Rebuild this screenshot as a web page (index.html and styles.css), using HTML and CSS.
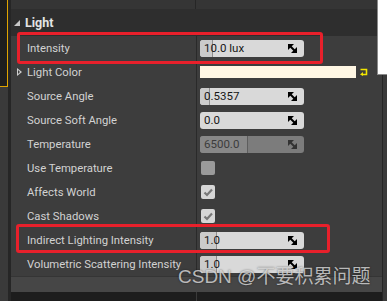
FILE: index.html
```html
<!DOCTYPE html>
<html lang="en">
<head>
    <meta charset="UTF-8">
    <meta name="viewport" content="width=device-width, initial-scale=1.0">
    <title>Light Details</title>
    <link rel="stylesheet" href="styles.css">
</head>
<body>
    <div id="screen">
        <div class="side-left">
            <div class="outline-box"></div>
        </div>

        <div class="panel">
            <div class="topbar">
                <div class="topbar-name"></div>
                <div class="topbar-value"></div>
            </div>
            <div class="section-head">
                <span class="caret"></span>
                <span class="section-title">Light</span>
            </div>

            <ul class="rows">
                <li class="row">
                    <div class="label">Intensity</div>
                    <div class="value">
                        <div class="num">
                            <div class="fill" style="width: 13px"></div>
                            <span class="num-text">10.0 lux</span>
                            <svg class="drag" width="9" height="9" viewBox="0 0 9 9"><polygon points="0,0 6,0 0,6"/><polygon points="9,9 3,9 9,3"/><line x1="1" y1="1" x2="8" y2="8" stroke="#000" stroke-width="2"/></svg>
                        </div>
                    </div>
                </li>
                <li class="row">
                    <div class="label"><span class="expander"></span>Light Color</div>
                    <div class="value">
                        <div class="color-bar"></div>
                        <svg class="reset" width="8" height="8" viewBox="0 0 8 8"><path d="M0.5 1.5 H6.5 V6.5 H2.5" fill="none" stroke="#f2e600" stroke-width="1.6"/><polygon points="0,6.5 3,4 3,8" fill="#f2e600"/></svg>
                    </div>
                </li>
                <li class="row">
                    <div class="label">Source Angle</div>
                    <div class="value">
                        <div class="num">
                            <div class="fill" style="width: 10px"></div>
                            <span class="num-text">0.5357</span>
                            <svg class="drag" width="9" height="9" viewBox="0 0 9 9"><polygon points="0,0 6,0 0,6"/><polygon points="9,9 3,9 9,3"/><line x1="1" y1="1" x2="8" y2="8" stroke="#000" stroke-width="2"/></svg>
                        </div>
                    </div>
                </li>
                <li class="row">
                    <div class="label">Source Soft Angle</div>
                    <div class="value">
                        <div class="num">
                            <span class="num-text">0.0</span>
                            <svg class="drag" width="9" height="9" viewBox="0 0 9 9"><polygon points="0,0 6,0 0,6"/><polygon points="9,9 3,9 9,3"/><line x1="1" y1="1" x2="8" y2="8" stroke="#000" stroke-width="2"/></svg>
                        </div>
                    </div>
                </li>
                <li class="row">
                    <div class="label">Temperature</div>
                    <div class="value">
                        <div class="num disabled">
                            <div class="fill" style="width: 48px"></div>
                            <span class="num-text">6500.0</span>
                            <svg class="drag" width="9" height="9" viewBox="0 0 9 9"><polygon points="0,0 6,0 0,6"/><polygon points="9,9 3,9 9,3"/><line x1="1" y1="1" x2="8" y2="8" stroke="#333" stroke-width="2"/></svg>
                        </div>
                    </div>
                </li>
                <li class="row">
                    <div class="label">Use Temperature</div>
                    <div class="value">
                        <span class="check off"></span>
                    </div>
                </li>
                <li class="row">
                    <div class="label">Affects World</div>
                    <div class="value">
                        <span class="check"><svg width="14" height="14" viewBox="0 0 14 14"><path d="M3.5 7.5 L6 10 L11 4.5" fill="none" stroke="#777" stroke-width="2.2"/></svg></span>
                    </div>
                </li>
                <li class="row">
                    <div class="label">Cast Shadows</div>
                    <div class="value">
                        <span class="check"><svg width="14" height="14" viewBox="0 0 14 14"><path d="M3.5 7.5 L6 10 L11 4.5" fill="none" stroke="#777" stroke-width="2.2"/></svg></span>
                    </div>
                </li>
                <li class="row">
                    <div class="label">Indirect Lighting Intensity</div>
                    <div class="value">
                        <div class="num">
                            <div class="fill" style="width: 17px"></div>
                            <span class="num-text">1.0</span>
                            <svg class="drag" width="9" height="9" viewBox="0 0 9 9"><polygon points="0,0 6,0 0,6"/><polygon points="9,9 3,9 9,3"/><line x1="1" y1="1" x2="8" y2="8" stroke="#000" stroke-width="2"/></svg>
                        </div>
                    </div>
                </li>
                <li class="row">
                    <div class="label">Volumetric Scattering Intensity</div>
                    <div class="value">
                        <div class="num">
                            <div class="fill" style="width: 17px"></div>
                            <span class="num-text">1.0</span>
                            <svg class="drag" width="9" height="9" viewBox="0 0 9 9"><polygon points="0,0 6,0 0,6"/><polygon points="9,9 3,9 9,3"/><line x1="1" y1="1" x2="8" y2="8" stroke="#000" stroke-width="2"/></svg>
                        </div>
                    </div>
                </li>
            </ul>

            <div class="footer-strip"></div>
            <div class="footer-dark">
                <div class="footer-name"></div>
                <div class="footer-value"></div>
            </div>
        </div>

        <div class="side-right"></div>

        <div class="popup"></div>
        <div class="mark mark-top"></div>
        <div class="mark mark-bottom"></div>
        <div class="watermark">CSDN @不要积累问题</div>
    </div>
</body>
</html>
```

FILE: styles.css
```css
* {
    box-sizing: border-box;
}
body {
    margin: 0;
    background-color: #1c1c1c;
    font-family: Roboto, "Liberation Sans", sans-serif;
}
#screen {
    position: relative;
    display: flex;
    width: 387px;
    height: 301px;
    overflow: hidden;
}
.side-left {
    width: 11px;
    background-color: #3a3a3a;
    border-right: 3px solid #262626;
}
.outline-box {
    width: 8px;
    height: 87px;
    background-color: #1e1e1e;
    border-right: 1px solid #e0a400;
    border-bottom: 1px solid #e0a400;
}
.panel {
    display: flex;
    flex-direction: column;
    width: 371px;
    background-color: #3d3d3d;
}
.topbar {
    display: flex;
    height: 9px;
    background-color: #353535;
}
.topbar-name {
    width: 185px;
    border-right: 1px solid #262626;
}
.section-head {
    display: flex;
    align-items: center;
    height: 27px;
    padding-left: 3px;
    background-color: #2e2e2e;
    color: #e4e4e4;
    font-size: 12.5px;
    font-weight: bold;
}
.caret {
    width: 0;
    height: 0;
    margin-right: 5px;
    border-left: 6px solid transparent;
    border-bottom: 6px solid #c8c8c8;
}
.rows {
    list-style: none;
    margin: 0;
    padding: 0;
}
.row {
    display: flex;
    height: 24px;
}
.label {
    position: relative;
    display: flex;
    align-items: center;
    width: 186px;
    padding-left: 16px;
    padding-top: 1px;
    border-right: 1px solid #2a2a2a;
    color: #d2d2d2;
    font-size: 11.3px;
    white-space: nowrap;
}
.expander {
    position: absolute;
    left: 6px;
    top: 8px;
    width: 0;
    height: 0;
    border-top: 4px solid transparent;
    border-bottom: 4px solid transparent;
    border-left: 5px solid #cfcfcf;
}
.expander::after {
    content: "";
    position: absolute;
    left: -4px;
    top: -2px;
    border-top: 2px solid transparent;
    border-bottom: 2px solid transparent;
    border-left: 2px solid #3d3d3d;
}
.value {
    display: flex;
    align-items: center;
    flex: 1;
    padding-left: 3px;
}
.num {
    position: relative;
    display: flex;
    align-items: center;
    width: 104px;
    height: 17px;
    padding: 0 4px;
    border-radius: 3px;
    background-color: #d9d9d9;
    color: #161616;
    font-size: 11.5px;
}
.fill {
    position: absolute;
    left: 0;
    top: 0;
    bottom: 0;
    border-radius: 3px 0 0 3px;
    background-color: #cbcbcb;
    border-right: 1px solid #8e8e8e;
}
.num-text {
    position: relative;
    flex: 1;
}
.drag {
    position: relative;
    margin-right: 3px;
}
.num.disabled {
    background-color: #7c7c7c;
    color: #3c3c3c;
}
.num.disabled .fill {
    background-color: #888888;
    border-right-color: #5e5e5e;
}
.num.disabled .drag {
    fill: #333;
}
.color-bar {
    width: 156px;
    height: 12px;
    background-color: #fff7e4;
}
.reset {
    margin-left: 4px;
}
.check {
    display: flex;
    width: 14px;
    height: 14px;
    margin-left: 1px;
    border-radius: 2px;
    background-color: #d6d6d6;
}
.check.off {
    background-color: #9a9a9a;
}
.footer-strip {
    height: 16px;
    background-color: #464646;
    border-top: 1px solid #353535;
}
.footer-dark {
    display: flex;
    flex: 1;
    background-color: #1d1d1d;
}
.footer-name {
    width: 186px;
    border-right: 1px solid #3a3a3a;
}
.side-right {
    flex: 1;
    background-color: #3a3a3a;
    border-left: 1px solid #262626;
}
.popup {
    position: absolute;
    left: 377px;
    top: 0;
    width: 12px;
    height: 75px;
    background-color: #ffffff;
    border-left: 1px solid #8a8a8a;
    border-bottom: 1px solid #8a8a8a;
}
.mark {
    position: absolute;
    border: 3px solid #e8202b;
    border-radius: 3px;
}
.mark-top {
    left: 17px;
    top: 32px;
    width: 306px;
    height: 32px;
}
.mark-bottom {
    left: 16px;
    top: 224px;
    width: 314px;
    height: 29px;
}
.watermark {
    position: absolute;
    left: 178px;
    top: 262px;
    color: rgba(225, 225, 225, 0.78);
    font-family: "Liberation Sans", "Noto Sans CJK SC", sans-serif;
    font-size: 19px;
    line-height: 30px;
    white-space: nowrap;
    text-shadow: 0 0 2px rgba(0, 0, 0, 0.5);
}
```
